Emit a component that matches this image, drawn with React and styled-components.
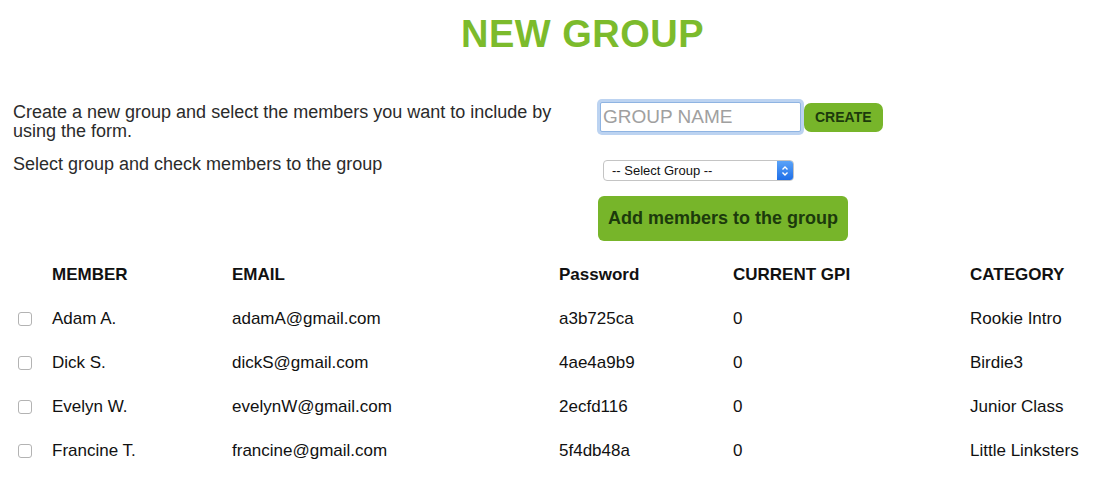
import React from "react";
import styled, { createGlobalStyle } from "styled-components";

const GlobalStyle = createGlobalStyle`
  body {
    margin: 0;
    background: #fff;
    font-family: "Liberation Sans", Arial, sans-serif;
    color: #111;
  }
`;

const Page = styled.div`
  width: 1105px;
  padding: 11px 0 0;
`;

const Title = styled.h1`
  margin: 0;
  padding-left: 60px;
  text-align: center;
  font-size: 38px;
  line-height: 46px;
  font-weight: 700;
  letter-spacing: 0.5px;
  color: #7cbb2c;
`;

const Top = styled.section`
  display: flex;
  margin-top: 43px;
`;

const Intro = styled.div`
  width: 595px;
  padding: 3px 0 0 13px;
  box-sizing: border-box;
  color: #2b2b2b;
  font-size: 18px;
  line-height: 19px;

  p {
    margin: 0 0 14px;
    padding-right: 20px;
  }
`;

const Controls = styled.div`
  display: flex;
  flex-direction: column;
  align-items: flex-start;
`;

const NameRow = styled.div`
  display: flex;
  align-items: center;
`;

const NameInput = styled.input`
  width: 201px;
  height: 30px;
  box-sizing: border-box;
  margin: 2px 3px 2px 5px;
  padding: 0 2px;
  border: 1px solid #8fb4e2;
  border-radius: 2px;
  box-shadow: 0 0 0 3px #bcd3f1;
  outline: none;
  font-family: "Liberation Sans", Arial, sans-serif;
  font-size: 19px;
  color: #333;

  &::placeholder {
    color: #a0a0a0;
  }
`;

const GreenButton = styled.button`
  background: #77b52a;
  border: none;
  border-radius: ${(p) => (p.$big ? "6px" : "7px")};
  color: #1c3a0c;
  font-family: "Liberation Sans", Arial, sans-serif;
  font-weight: 700;
  font-size: ${(p) => (p.$big ? "18px" : "14px")};
  height: ${(p) => (p.$big ? "45px" : "29px")};
  padding: ${(p) => (p.$big ? "0 10px" : "0 11px")};
  cursor: pointer;
`;

const SelectBox = styled.div`
  display: flex;
  width: 191px;
  height: 21px;
  box-sizing: border-box;
  margin: 26px 0 0 8px;
  border: 1px solid #c4c4c4;
  border-radius: 4px;
  overflow: hidden;
  background: #fff;
`;

const Select = styled.select`
  flex: 1;
  appearance: none;
  border: none;
  outline: none;
  background: transparent;
  padding: 0 0 0 8px;
  font-family: "Liberation Sans", Arial, sans-serif;
  font-size: 13px;
  color: #111;
`;

const Arrows = styled.div`
  width: 16px;
  display: flex;
  align-items: center;
  justify-content: center;
  background: linear-gradient(#5aa3f8, #1f6fe8);
`;

const AddWrap = styled.div`
  margin: 15px 0 0 3px;
`;

const Table = styled.div`
  margin-top: 12px;
  padding-left: 13px;
`;

const Row = styled.div`
  display: grid;
  grid-template-columns: 39px 180px 327px 174px 237px 1fr;
  align-items: center;
  height: 44px;
  font-size: 17px;
  font-weight: ${(p) => (p.$head ? 700 : 400)};
  color: #111;
`;

const Check = styled.input`
  appearance: none;
  width: 14px;
  height: 14px;
  margin: 0 0 0 5px;
  border: 1px solid #b3b3b3;
  border-radius: 3px;
  background: #fff;
`;

const members = [
  ["Adam A.", "adamA@gmail.com", "a3b725ca", "0", "Rookie Intro"],
  ["Dick S.", "dickS@gmail.com", "4ae4a9b9", "0", "Birdie3"],
  ["Evelyn W.", "evelynW@gmail.com", "2ecfd116", "0", "Junior Class"],
  ["Francine T.", "francine@gmail.com", "5f4db48a", "0", "Little Linksters"],
];

export default function App() {
  return (
    <Page>
      <GlobalStyle />
      <Title>NEW GROUP</Title>
      <Top>
        <Intro>
          <p>
            Create a new group and select the members you want to include by
            using the form.
          </p>
          <p>Select group and check members to the group</p>
        </Intro>
        <Controls>
          <NameRow>
            <NameInput placeholder="GROUP NAME" autoFocus />
            <GreenButton>CREATE</GreenButton>
          </NameRow>
          <SelectBox>
            <Select defaultValue="">
              <option value="">-- Select Group --</option>
            </Select>
            <Arrows>
              <svg width="8" height="12" viewBox="0 0 8 12" fill="none" stroke="#fff" strokeWidth="1.4">
                <path d="M1.5 4.5 L4 2 L6.5 4.5" />
                <path d="M1.5 7.5 L4 10 L6.5 7.5" />
              </svg>
            </Arrows>
          </SelectBox>
          <AddWrap>
            <GreenButton $big>Add members to the group</GreenButton>
          </AddWrap>
        </Controls>
      </Top>
      <Table>
        <Row $head>
          <span />
          <span>MEMBER</span>
          <span>EMAIL</span>
          <span>Password</span>
          <span>CURRENT GPI</span>
          <span>CATEGORY</span>
        </Row>
        {members.map((m) => (
          <Row key={m[1]}>
            <Check type="checkbox" />
            {m.map((v, i) => (
              <span key={i}>{v}</span>
            ))}
          </Row>
        ))}
      </Table>
    </Page>
  );
}
